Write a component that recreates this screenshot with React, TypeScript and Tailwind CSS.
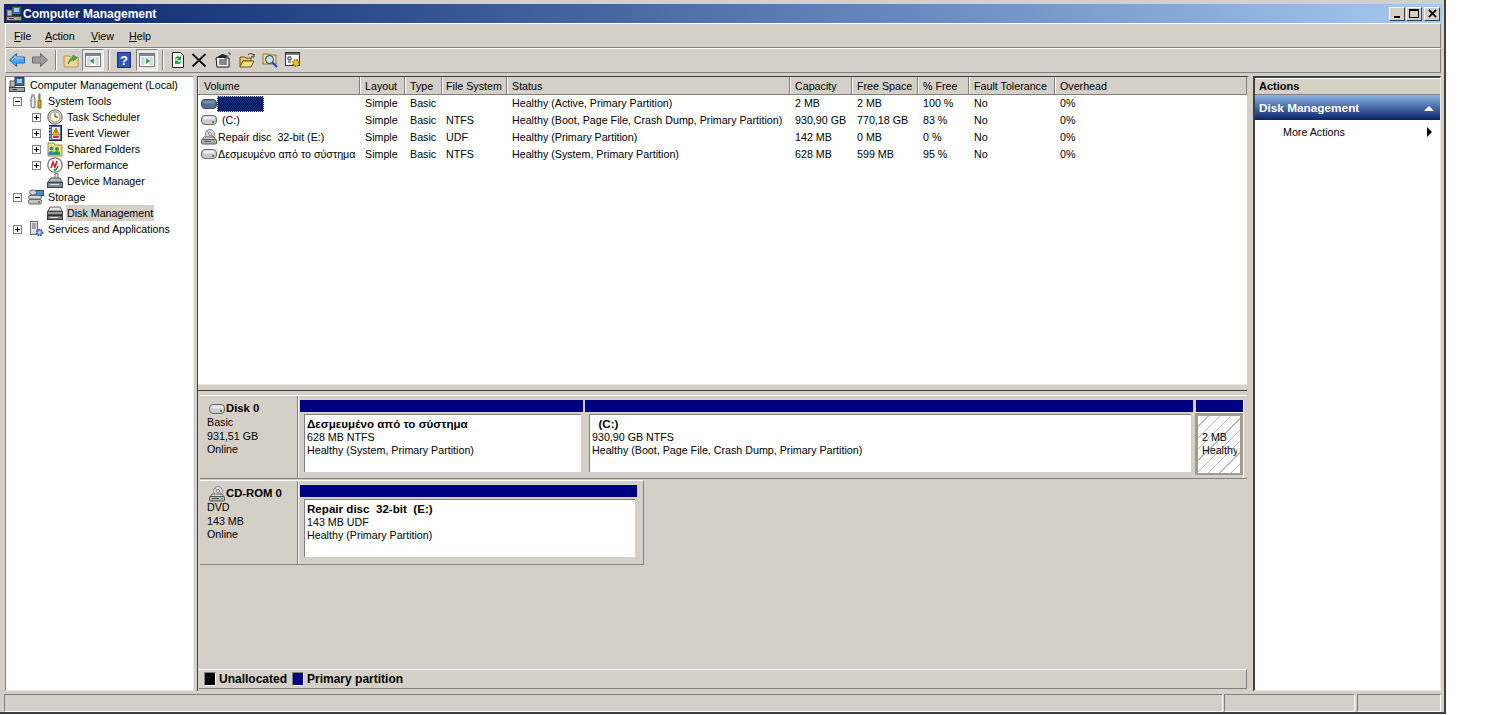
import type { ReactNode } from 'react';

type IconProps = { className?: string };

const Svg = ({ children, className = 'w-4 h-4' }: { children: ReactNode; className?: string }) => (
  <svg viewBox="0 0 16 16" className={`${className} shrink-0`}>
    {children}
  </svg>
);

// tree icons
const ComputerIcon = () => (
  <Svg>
    <rect x="6" y="0.5" width="9" height="8" fill="#3a6ea5" stroke="#333" />
    <rect x="8" y="2" width="5" height="4" fill="#9cc8f0" />
    <rect x="1" y="4" width="5" height="6" fill="#b9b9b9" stroke="#555" />
    <rect x="0.5" y="10.5" width="15" height="4" fill="#a8a8a8" stroke="#444" />
    <rect x="3" y="12" width="5" height="1" fill="#333" />
    <rect x="12" y="12" width="2" height="1" fill="#2c2" />
  </Svg>
);
const ToolsIcon = () => (
  <Svg>
    <path d="M4 1v3l-1 1v9l2 1 2-1V5L6 4V1" fill="#e8e8e8" stroke="#666" />
    <path d="M11 1v5h1V1z" fill="#999" stroke="#666" />
    <path d="M10 7h3v8h-3z" fill="#e8a510" stroke="#8a5c00" />
  </Svg>
);
const ClockIcon = () => (
  <Svg>
    <circle cx="8" cy="8" r="7.2" fill="#d9d4b8" stroke="#666" />
    <circle cx="8" cy="8" r="5" fill="#fffbe6" stroke="#999" />
    <path d="M8 4.5V8h3" fill="none" stroke="#333" />
  </Svg>
);
const EventIcon = () => (
  <Svg>
    <rect x="2.5" y="0.5" width="12" height="15" fill="#3f62b8" stroke="#223" />
    <rect x="5" y="2" width="8" height="12" fill="#e6ecf8" />
    <path d="M9 3l3.5 7h-7z" fill="#f3c615" stroke="#a67c00" />
    <rect x="8.5" y="5" width="1" height="3" fill="#c00" />
    <rect x="6" y="11" width="6" height="2" fill="#d33" />
    <path d="M2 2h2M2 5h2M2 8h2M2 11h2M2 14h2" stroke="#eee" />
  </Svg>
);
const SharedIcon = () => (
  <Svg>
    <path d="M1 2h6l1 2h7v11H1z" fill="#f2d98a" stroke="#a08540" />
    <circle cx="4.5" cy="7.5" r="2" fill="#3a7fd0" />
    <path d="M1.5 14v-3l3-1 3 1v3z" fill="#3a7fd0" />
    <circle cx="10" cy="8" r="2" fill="#2d9c3c" />
    <path d="M7 14v-3l3-1 3 1v3z" fill="#2d9c3c" />
  </Svg>
);
const PerfIcon = () => (
  <Svg>
    <circle cx="8" cy="8" r="7.2" fill="#fff" stroke="#777" strokeWidth="1.3" />
    <path d="M4 11l2-6 2 5 2-6" fill="none" stroke="#d01818" strokeWidth="1.6" />
    <path d="M9 13l2-4" stroke="#222" />
    <rect x="7" y="12" width="2" height="2" fill="#2c9a2c" />
  </Svg>
);
const DeviceIcon = () => (
  <Svg>
    <rect x="8" y="0.5" width="3" height="5" fill="#ddd" stroke="#777" />
    <path d="M1 9l3-4h9l2 4z" fill="#b8bcc4" stroke="#555" />
    <rect x="0.5" y="9.5" width="15" height="5" fill="#7f8796" stroke="#444" />
    <rect x="3" y="11" width="9" height="1" fill="#ddd" />
    <rect x="13" y="11" width="1" height="1" fill="#2c2" />
  </Svg>
);
const StorageIcon = () => (
  <Svg>
    <rect x="8" y="1.5" width="7.5" height="5" fill="#3d8fd8" stroke="#26507c" />
    <ellipse cx="5" cy="3.5" rx="3.5" ry="2.5" fill="#cfd6d6" stroke="#666" />
    <rect x="0.5" y="6.5" width="13" height="3.5" rx="1.5" fill="#d6d6d6" stroke="#666" />
    <rect x="0.5" y="10.5" width="13" height="4.5" rx="1.5" fill="#c4c4c4" stroke="#666" />
    <rect x="10" y="12" width="2" height="2" fill="#2bb02b" />
  </Svg>
);
const DiskMgmtIcon = () => (
  <Svg>
    <path d="M3 2h10l2 4H1z" fill="#e4e4e4" stroke="#666" />
    <rect x="0.5" y="6.5" width="15" height="3" fill="#9a9a9a" stroke="#444" />
    <rect x="0.5" y="10.5" width="15" height="4" fill="#747474" stroke="#333" />
    <rect x="3" y="12" width="8" height="1" fill="#ddd" />
    <rect x="12" y="12" width="2" height="1" fill="#2c2" />
  </Svg>
);
const ServicesIcon = () => (
  <Svg>
    <rect x="2.5" y="0.5" width="7" height="13" fill="#dfe3ea" stroke="#667" />
    <path d="M4 3h4M4 5h4M4 7h4" stroke="#667" />
    <circle cx="11.5" cy="11.5" r="3" fill="#7aa2d8" stroke="#3c5a8c" strokeWidth="1.6" strokeDasharray="1.5 1" />
    <circle cx="11.5" cy="11.5" r="1" fill="#fff" />
  </Svg>
);

// drive icons for list and disk labels
const DriveIcon = ({ dark }: { dark?: boolean }) => (
  <Svg>
    <rect x="0.5" y="3.5" width="15" height="9" rx="3.5" fill={dark ? '#5a6a94' : '#c9c9c9'} stroke={dark ? '#3c4664' : '#6a6a6a'} />
    <rect x="2" y="4.5" width="12" height="3" rx="1.5" fill={dark ? '#7d8bb0' : '#ececec'} />
    <rect x="11" y="9" width="2" height="2" fill="#1fa81f" />
  </Svg>
);
const CdIcon = () => (
  <Svg>
    <circle cx="9" cy="5" r="4.5" fill="#dcdcdc" stroke="#8a8a8a" />
    <circle cx="9" cy="5" r="1.5" fill="#fff" stroke="#a070c0" />
    <path d="M6 2l2 2M12 7l-2-1" stroke="#74b56c" />
    <path d="M1 11l2-3h10l2 3z" fill="#d8d8d8" stroke="#666" />
    <rect x="0.5" y="10.5" width="15" height="4.5" rx="1" fill="#b4b4b4" stroke="#555" />
    <rect x="3" y="12" width="7" height="1" fill="#555" />
    <rect x="12" y="12" width="2" height="1" fill="#2c2" />
  </Svg>
);

// toolbar icons
const BackIcon = () => (
  <Svg>
    <path d="M0.5 8L7.5 1.5V5H15.5V11H7.5V14.5z" fill="#4aa6ee" stroke="#1a66b0" />
    <path d="M3 8l4-4v2h7" fill="none" stroke="#a8dcff" />
  </Svg>
);
const ForwardIcon = () => (
  <Svg>
    <path d="M15.5 8L8.5 1.5V5H0.5V11H8.5V14.5z" fill="#9a9a9a" stroke="#6a6a6a" />
  </Svg>
);
const UpIcon = () => (
  <Svg>
    <path d="M1 4h5l1 1h8v10H1z" fill="#efd696" stroke="#b0985a" />
    <path d="M5 12c1-4 3-6 5-7V3l4 3-4 3V7c-2 1-3 3-5 5z" fill="#43b04a" stroke="#20742a" strokeWidth="0.6" />
  </Svg>
);
const TreeToggleIcon = ({ arrow }: { arrow: string }) => (
  <Svg>
    <rect x="0.5" y="1.5" width="15" height="13" fill="#fff" stroke="#6d7785" />
    <rect x="1" y="2" width="14" height="2" fill="#7e8a9a" />
    <rect x="2" y="5" width="4" height="8" fill="#d5dae2" />
    <rect x="10" y="5" width="4" height="8" fill="#d5dae2" />
    <path d={arrow} fill="#2aa04a" />
  </Svg>
);
const HelpIcon = () => (
  <div className="w-[14px] h-4 bg-[#2f55b8] border border-[#1c2f78] flex items-center justify-center text-white text-[13px] font-bold leading-none">
    ?
  </div>
);
const RefreshIcon = () => (
  <Svg>
    <path d="M2.5 0.5h8l3 3v12h-11z" fill="#fff" stroke="#222" />
    <path d="M5 7a3 3 0 0 1 5-2l1-1v4H7l1.5-1.5A1.5 1.5 0 0 0 6 7.5z" fill="#1f9a2e" />
    <path d="M11 9.5a3 3 0 0 1-5 2l-1 1v-4h4L7.5 10A1.5 1.5 0 0 0 10 9z" fill="#1f9a2e" />
  </Svg>
);
const DeleteIcon = () => (
  <Svg>
    <path d="M1.5 2L14.5 14.5M14.5 2L1.5 14.5" stroke="#111" strokeWidth="1.8" />
  </Svg>
);
const PropsIcon = () => (
  <Svg>
    <path d="M1 6l8-3v3h5v9H2z" fill="#fff" stroke="#111" />
    <path d="M4 8h8M4 10h8M4 12h8" stroke="#111" />
    <path d="M1 6l6-4 7 2-5 2z" fill="#222" />
    <path d="M13 1h2v2" stroke="#2a3fa8" fill="none" />
  </Svg>
);
const OpenIcon = () => (
  <Svg>
    <path d="M1 5h5l1 1h5v3H4l-3 6z" fill="#e8c85c" stroke="#6a5a20" />
    <path d="M1 15l3-6h11l-3 6z" fill="#f5e08a" stroke="#6a5a20" />
    <path d="M9 3c2-2 4-2 5 0l1-1v3h-3" fill="none" stroke="#222" />
  </Svg>
);
const FindIcon = () => (
  <Svg>
    <path d="M1 2h6l1 1h6v9H1z" fill="#f0dc96" stroke="#8a7a40" />
    <circle cx="7.5" cy="7.5" r="4" fill="#bfe4f8" stroke="#333" />
    <path d="M10.5 10.5L15 15" stroke="#2040c0" strokeWidth="2" />
  </Svg>
);
const GearSheetIcon = () => (
  <Svg>
    <rect x="0.5" y="0.5" width="14" height="13" fill="#fff" stroke="#333" />
    <rect x="1" y="1" width="13" height="2" fill="#777" />
    <path d="M3 5h3v3H3zM3 10h3" fill="none" stroke="#333" />
    <circle cx="11" cy="11" r="3.2" fill="#eec41c" stroke="#7a6200" strokeWidth="1.4" strokeDasharray="1.5 1" />
  </Svg>
);

const Sep = ({ className }: IconProps) => (
  <div className={`w-[2px] h-[20px] border-l border-[#808080] border-r border-r-white shrink-0 ${className}`} />
);

const Pressed = ({ children, className }: { children: ReactNode; className: string }) => (
  <div className={`w-[22px] h-[22px] flex items-center justify-center border border-t-[#808080] border-l-[#808080] border-r-white border-b-white bg-[#eae8e3] ${className}`}>
    {children}
  </div>
);

const TreeBox = ({ open, className = '' }: { open?: boolean; className?: string }) => (
  <div className={`w-[9px] h-[9px] border border-[#808080] bg-white relative shrink-0 ${className}`}>
    <div className="absolute left-[1px] top-[3px] w-[5px] h-[1px] bg-black" />
    {!open && <div className="absolute left-[3px] top-[1px] w-[1px] h-[5px] bg-black" />}
  </div>
);

const treeRows = [
  { label: 'System Tools', icon: <ToolsIcon />, level: 1, box: 'open' },
  { label: 'Task Scheduler', icon: <ClockIcon />, level: 2, box: 'closed' },
  { label: 'Event Viewer', icon: <EventIcon />, level: 2, box: 'closed' },
  { label: 'Shared Folders', icon: <SharedIcon />, level: 2, box: 'closed' },
  { label: 'Performance', icon: <PerfIcon />, level: 2, box: 'closed' },
  { label: 'Device Manager', icon: <DeviceIcon />, level: 2, box: '' },
  { label: 'Storage', icon: <StorageIcon />, level: 1, box: 'open' },
  { label: 'Disk Management', icon: <DiskMgmtIcon />, level: 2, box: '', selected: true },
  { label: 'Services and Applications', icon: <ServicesIcon />, level: 1, box: 'closed' },
];

const columns = [
  { name: 'Volume', w: 'w-[162px] pl-[5px]' },
  { name: 'Layout', w: 'w-[45px] pl-[4px]' },
  { name: 'Type', w: 'w-[37px] pl-[4px]' },
  { name: 'File System', w: 'w-[65px] pl-[3px]' },
  { name: 'Status', w: 'w-[283px] pl-[4px]' },
  { name: 'Capacity', w: 'w-[62px] pl-[4px]' },
  { name: 'Free Space', w: 'w-[66px] pl-[4px]' },
  { name: '% Free', w: 'w-[51px] pl-[4px]' },
  { name: 'Fault Tolerance', w: 'w-[86px] pl-[4px]' },
  { name: 'Overhead', w: 'flex-1 pl-[4px]' },
];

const volumes = [
  { icon: <DriveIcon dark />, name: '', cells: ['Simple', 'Basic', '', 'Healthy (Active, Primary Partition)', '2 MB', '2 MB', '100 %', 'No', '0%'] },
  { icon: <DriveIcon />, name: '(C:)', cells: ['Simple', 'Basic', 'NTFS', 'Healthy (Boot, Page File, Crash Dump, Primary Partition)', '930,90 GB', '770,18 GB', '83 %', 'No', '0%'] },
  { icon: <CdIcon />, name: 'Repair disc  32-bit (E:)', cells: ['Simple', 'Basic', 'UDF', 'Healthy (Primary Partition)', '142 MB', '0 MB', '0 %', 'No', '0%'] },
  { icon: <DriveIcon />, name: 'Δεσμευμένο από το σύστημα', cells: ['Simple', 'Basic', 'NTFS', 'Healthy (System, Primary Partition)', '628 MB', '599 MB', '95 %', 'No', '0%'] },
];

const Partition = ({ title, lines, w, className = '' }: { title: string; lines: string[]; w: string; className?: string }) => (
  <div className={`${w} flex flex-col shrink-0 ${className}`}>
    <div className="h-[12px] bg-[#000080] mr-[1px]" />
    <div className="pl-[4px] pr-[3px] pt-[2px] pb-[3px]">
      <div className="h-[58px] bg-white border-l border-t border-[#808080] pl-[2px] pt-[3px] leading-[13px] whitespace-pre">
        <div className="font-bold text-[11.6px] -mt-[1px] mb-[1px]">{title}</div>
        {lines.map((l) => (
          <div key={l}>{l}</div>
        ))}
      </div>
    </div>
  </div>
);

const DiskLabel = ({ icon, name, lines }: { icon: ReactNode; name: string; lines: string[] }) => (
  <div className="w-[98px] shrink-0 border-r border-[#808080] pl-[7px] pt-[6px] leading-[13.5px]">
    <div className="flex items-center h-[14px] font-bold text-[11.3px] whitespace-pre">
      <span className="ml-[2px] mr-[1px]">{icon}</span>
      {name}
    </div>
    {lines.map((l) => (
      <div key={l}>{l}</div>
    ))}
  </div>
);

export default function App() {
  return (
    <div className="w-[1503px] h-[715px] bg-white overflow-hidden text-[10.7px] text-black font-['Liberation_Sans',sans-serif]">
      <div className="w-[1446px] h-[714px] flex flex-col bg-[#d4d0c8] border-r-2 border-b-2 border-[#404040] pt-[4px] pl-[4px] pr-[2px]">
        {/* Title bar */}
        <div className="h-[19px] shrink-0 flex items-center bg-gradient-to-r from-[#0a246a] to-[#a6caf0] pl-[2px] pr-[2px]">
          <ComputerIcon />
          <span className="ml-[1px] text-white font-bold text-[12px]">Computer Management</span>
          <div className="ml-auto flex items-center">
            <div className="w-[16px] h-[14px] bg-[#d4d0c8] border border-t-white border-l-white border-r-[#404040] border-b-[#404040] flex items-end justify-center pb-[2px]">
              <div className="w-[6px] h-[2px] bg-black" />
            </div>
            <div className="ml-[1px] w-[16px] h-[14px] bg-[#d4d0c8] border border-t-white border-l-white border-r-[#404040] border-b-[#404040] flex items-center justify-center">
              <div className="w-[10px] h-[9px] border border-black border-t-2" />
            </div>
            <div className="ml-[2px] w-[16px] h-[14px] bg-[#d4d0c8] border border-t-white border-l-white border-r-[#404040] border-b-[#404040] flex items-center justify-center">
              <svg viewBox="0 0 10 10" className="w-[9px] h-[9px]">
                <path d="M1 1L9 9M9 1L1 9" stroke="#000" strokeWidth="1.8" />
              </svg>
            </div>
          </div>
        </div>

        {/* Menu bar */}
        <div className="h-[25px] shrink-0 mx-[1px] flex items-center pl-[8px] pt-[1px] border-t border-l border-t-white border-l-white border-b border-r border-b-[#808080] border-r-[#808080]">
          <span className="w-[31px]"><u>F</u>ile</span>
          <span className="w-[46px]"><u>A</u>ction</span>
          <span className="w-[38px]"><u>V</u>iew</span>
          <span><u>H</u>elp</span>
        </div>

        {/* Toolbar */}
        <div className="h-[25px] shrink-0 mx-[1px] flex items-center pl-[3px] pb-[1px] border-t border-l border-t-white border-l-white border-b border-r border-b-[#808080] border-r-[#808080]">
          <BackIcon />
          <span className="ml-[7px]"><ForwardIcon /></span>
          <Sep className="ml-[7px]" />
          <span className="ml-[6px]"><UpIcon /></span>
          <Pressed className="ml-[3px]"><TreeToggleIcon arrow="M9 6v6L5 9z" /></Pressed>
          <Sep className="ml-[4px]" />
          <span className="ml-[7px]"><HelpIcon /></span>
          <Pressed className="ml-[5px]"><TreeToggleIcon arrow="M7 6v6l4-3z" /></Pressed>
          <Sep className="ml-[4px]" />
          <span className="ml-[6px]"><RefreshIcon /></span>
          <span className="ml-[5px]"><DeleteIcon /></span>
          <span className="ml-[8px]"><PropsIcon /></span>
          <span className="ml-[8px]"><OpenIcon /></span>
          <span className="ml-[7px]"><FindIcon /></span>
          <span className="ml-[7px]"><GearSheetIcon /></span>
        </div>

        {/* Main area */}
        <div className="h-[615px] shrink-0 mt-[3px] ml-[1px] flex">
          {/* Tree */}
          <div className="w-[189px] shrink-0 bg-white border-l border-t border-[#808080] border-r border-r-[#ece9e3] border-b border-b-[#ece9e3]">
            <div className="h-[16px] flex items-center pl-[3px]">
              <ComputerIcon />
              <span className="ml-[5px] whitespace-pre">Computer Management (Local)</span>
            </div>
            {treeRows.map((r) => (
              <div key={r.label} className={`h-[16px] flex items-center ${r.level === 1 ? 'pl-[7px]' : 'pl-[26px]'}`}>
                {r.box ? <TreeBox open={r.box === 'open'} /> : <div className="w-[9px] shrink-0" />}
                <span className="ml-[6px]">{r.icon}</span>
                <span className={`ml-[3px] px-[1px] leading-[16px] whitespace-pre ${r.selected ? 'bg-[#d4d0c8]' : ''}`}>{r.label}</span>
              </div>
            ))}
          </div>

          {/* Center */}
          <div className="w-[1052px] ml-[3px] shrink-0 flex flex-col border-l border-t border-[#404040] border-r-2 border-r-[#d4d0c8]">
            <div className="h-[307px] shrink-0 bg-white flex flex-col">
              <div className="h-[18px] shrink-0 flex bg-[#d4d0c8] border-b border-[#808080]">
                {columns.map((c) => (
                  <div key={c.name} className={`${c.w} pt-[1px] flex items-center border-l border-l-white border-r border-r-[#808080] whitespace-pre`}>
                    {c.name}
                  </div>
                ))}
              </div>
              {volumes.map((v, i) => (
                <div key={i} className="h-[17px] flex items-center">
                  <div className="w-[162px] flex items-center pl-[3px] shrink-0 overflow-hidden whitespace-pre">
                    {v.icon}
                    {i === 0 ? (
                      <div className="w-[47px] h-[16px] bg-[#0a246a] border border-dotted border-[#e8d890]" />
                    ) : (
                      <span className={i === 1 ? 'ml-[5px]' : 'ml-[1px]'}>{v.name}</span>
                    )}
                  </div>
                  {v.cells.map((cell, j) => (
                    <div key={j} className={`${columns[j + 1].w} ml-[1px] -mr-[1px] whitespace-pre`}>
                      {cell}
                    </div>
                  ))}
                </div>
              ))}
            </div>

            {/* Splitter */}
            <div className="h-[7px] shrink-0 border-t border-[#ece9e3] border-b border-b-[#404040]" />

            {/* Graphical view */}
            <div className="flex-1 flex flex-col pt-[4px] pl-[2px]">
              <div className="w-[1047px] h-[84px] shrink-0 flex border-b border-[#808080] border-t border-t-white">
                <DiskLabel icon={<DriveIcon />} name="Disk 0" lines={['Basic', '931,51 GB', 'Online']} />
                <div className="flex-1 flex border-l border-white pl-[1px] pt-[4px]">
                  <Partition w="w-[284px]" title="Δεσμευμένο από το σύστημα" lines={['628 MB NTFS', 'Healthy (System, Primary Partition)']} />
                  <Partition w="w-[609px]" title="  (C:)" lines={['930,90 GB NTFS', 'Healthy (Boot, Page File, Crash Dump, Primary Partition)']} className="ml-[1px]" />
                  <div className="w-[49px] ml-[1px] shrink-0 flex flex-col border-r border-white">
                    <div className="h-[12px] bg-[#000080] ml-[1px]" />
                    <div className="h-[63px] bg-[#a09c94] p-[3px] border-t border-white">
                      <div className="h-[57px] overflow-hidden whitespace-pre pl-[4px] pt-[15px] leading-[13px] bg-[repeating-linear-gradient(135deg,#ffffff_0,#ffffff_7px,#b8b8b8_7px,#b8b8b8_8px)]">
                        <div>2 MB</div>
                        <div className="w-[35px] overflow-hidden">Healthy</div>
                      </div>
                    </div>
                  </div>
                </div>
              </div>

              <div className="w-[444px] h-[85px] shrink-0 mt-[1px] flex border-b border-r border-[#808080] border-t border-t-white">
                <DiskLabel icon={<CdIcon />} name="CD-ROM 0" lines={['DVD', '143 MB', 'Online']} />
                <div className="flex-1 flex border-l border-white pl-[1px] pt-[4px]">
                  <Partition w="w-[338px]" title="Repair disc  32-bit  (E:)" lines={['143 MB UDF', 'Healthy (Primary Partition)']} />
                </div>
              </div>

              {/* Legend */}
              <div className="mt-auto mb-[2px] -ml-[1px] h-[20px] shrink-0 flex items-center pl-[5px] font-bold text-[12px] border-t border-t-white border-b border-b-[#808080] border-r border-r-[#808080]">
                <div className="w-[12px] h-[14px] bg-black border border-t-[#808080] border-l-[#808080] border-r-white border-b-white" />
                <span className="ml-[3px]">Unallocated</span>
                <div className="ml-[5px] w-[12px] h-[14px] bg-[#000080] border border-t-[#808080] border-l-[#808080] border-r-white border-b-white" />
                <span className="ml-[3px]">Primary partition</span>
              </div>
            </div>
          </div>

          {/* Actions */}
          <div className="w-[188px] ml-[4px] shrink-0 flex flex-col bg-white border-l-2 border-t-2 border-l-[#404040] border-t-[#404040] border-r border-b border-r-[#ece9e3] border-b-[#ece9e3]">
            <div className="h-[17px] shrink-0 bg-[#d4d0c8] border-t border-white border-b border-b-[#808080] pl-[4px] flex items-center font-bold text-[11px]">Actions</div>
            <div className="h-[25px] shrink-0 flex items-center pl-[4px] pr-[6px] pt-[2px] text-white font-bold text-[11.8px] bg-gradient-to-b from-[#8fb4e4] to-[#0a246a]">
              Disk Management
              <svg viewBox="0 0 10 5" className="ml-auto w-[10px] h-[5px]">
                <path d="M5 0L10 5H0z" fill="#fff" />
              </svg>
            </div>
            <div className="h-[24px] shrink-0 flex items-center pl-[28px] pr-[8px]">
              More Actions
              <svg viewBox="0 0 5 10" className="ml-auto w-[5px] h-[10px]">
                <path d="M0 0L5 5L0 10z" fill="#000" />
              </svg>
            </div>
          </div>
        </div>

        {/* Status bar */}
        <div className="h-[18px] shrink-0 mt-[3px] flex">
          <div className="w-[1219px] border-t border-l border-t-[#808080] border-l-[#808080] border-b border-r border-b-white border-r-white" />
          <div className="w-[131px] ml-[1px] border-t border-l border-t-[#808080] border-l-[#808080] border-b border-r border-b-white border-r-white" />
          <div className="w-[84px] ml-[2px] border-t border-l border-t-[#808080] border-l-[#808080] border-b border-r border-b-white border-r-white" />
        </div>
      </div>
    </div>
  );
}
